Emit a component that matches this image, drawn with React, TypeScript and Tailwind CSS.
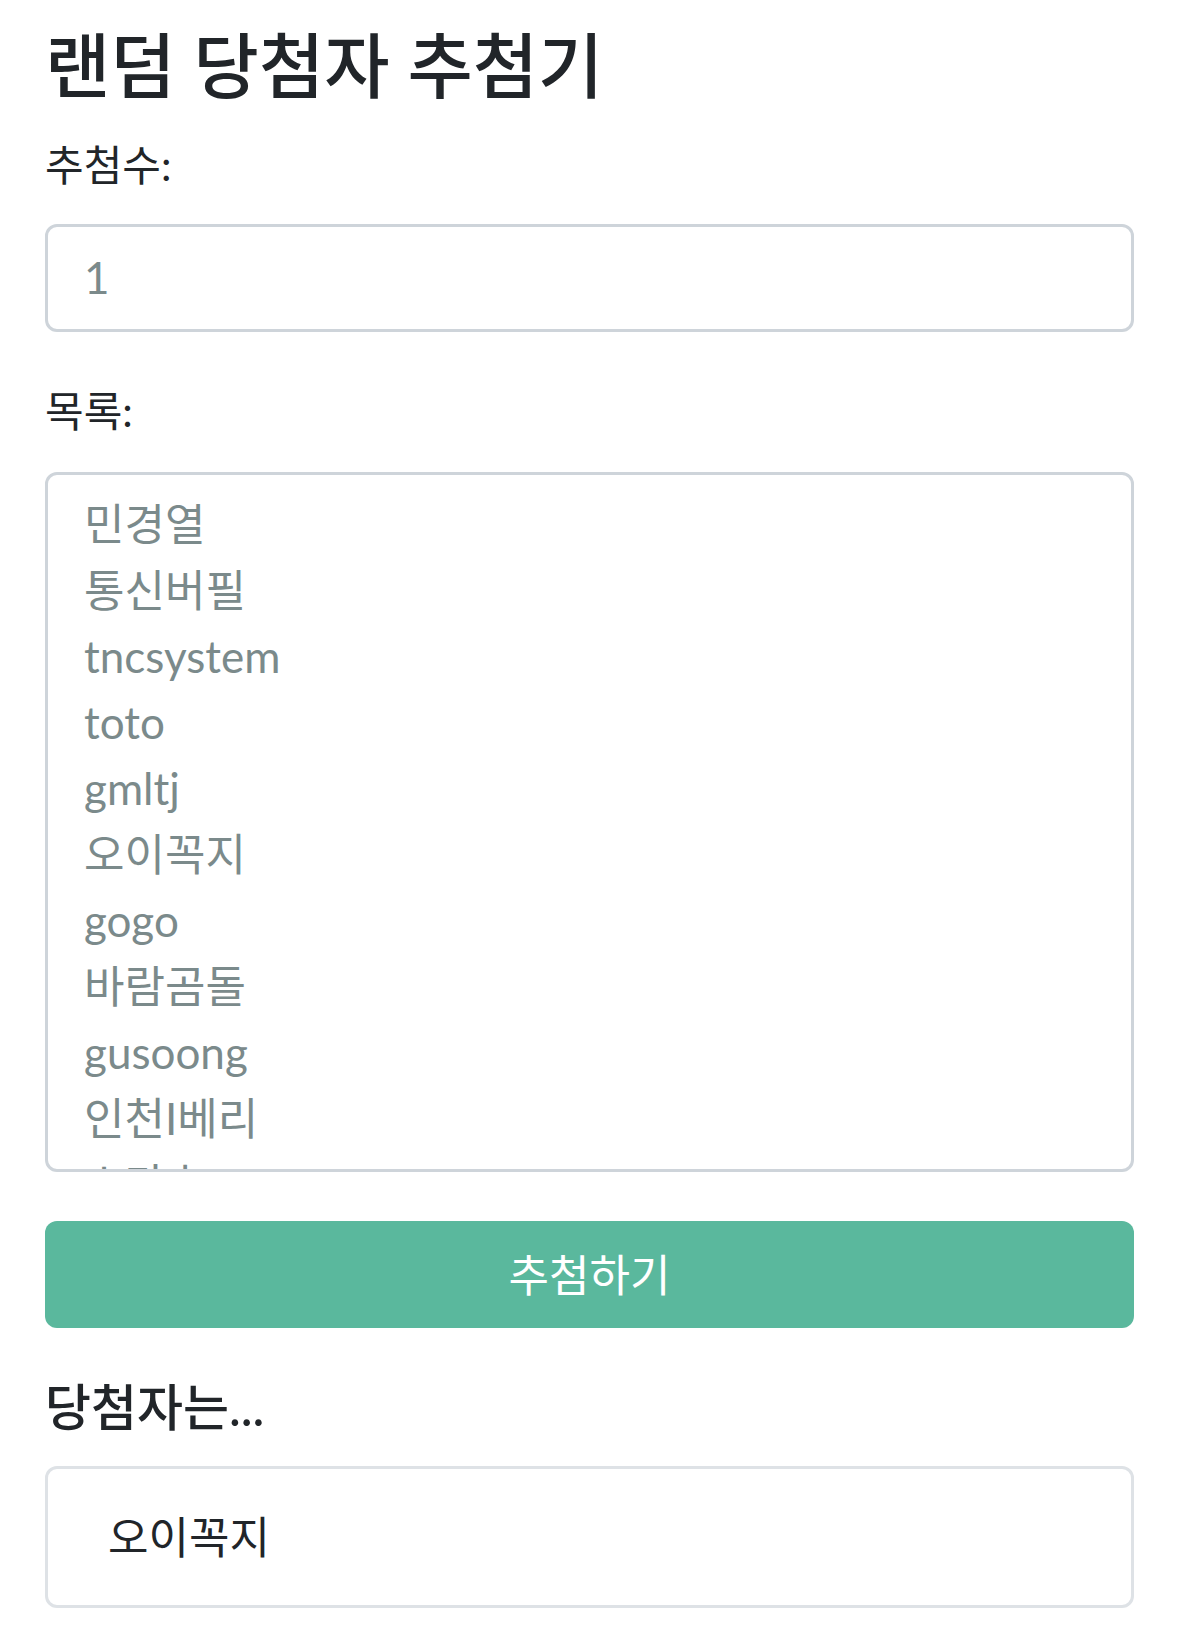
const names = [
  "민경열",
  "통신버필",
  "tncsystem",
  "toto",
  "gmltj",
  "오이꼭지",
  "gogo",
  "바람곰돌",
  "gusoong",
  "인천I베리",
  "스타호",
  "hana",
];

export default function App() {
  return (
    <main className="min-h-screen bg-white font-['Lato','Noto_Sans_CJK_KR',sans-serif] text-[#212529]">
      <div className="px-[45px] pt-[22px] pb-[40px]">
        {/* Title */}
        <h1 className="text-[71px] leading-[86px] font-medium">랜덤 당첨자 추첨기</h1>

        {/* Count */}
        <div className="mt-[26px] mb-[48px]">
          <label className="block text-[42px] leading-[63px] mb-[27px]">추첨수:</label>
          <input
            type="number"
            defaultValue={1}
            className="block w-full h-[108px] rounded-[12px] border-[3px] border-[#ced4da] bg-white px-[36px] pb-[3px] text-[44px] text-[#7b8a8b] outline-none"
          />
        </div>

        {/* List */}
        <div className="mb-[49px]">
          <label className="block text-[42px] leading-[63px] mb-[29px]">목록:</label>
          <textarea
            readOnly
            defaultValue={names.join("\n")}
            className="block w-full h-[700px] resize-none overflow-hidden rounded-[12px] border-[3px] border-[#ced4da] bg-white px-[36px] pt-[16px] pb-[18px] text-[44px] leading-[66px] text-[#7b8a8b] outline-none"
          />
        </div>

        {/* Draw button */}
        <button className="block w-full h-[107px] rounded-[12px] bg-[#5ab89d] text-[44px] text-white">
          추첨하기
        </button>

        {/* Result */}
        <h4 className="mt-[49px] mb-[29px] text-[50px] leading-[60px] font-medium">당첨자는...</h4>
        <div className="rounded-[12px] border-[3px] border-[#dee2e6] pl-[60px] pr-[36px] py-[35px] text-[44px] leading-[66px]">
          오이꼭지
        </div>
      </div>
    </main>
  );
}
